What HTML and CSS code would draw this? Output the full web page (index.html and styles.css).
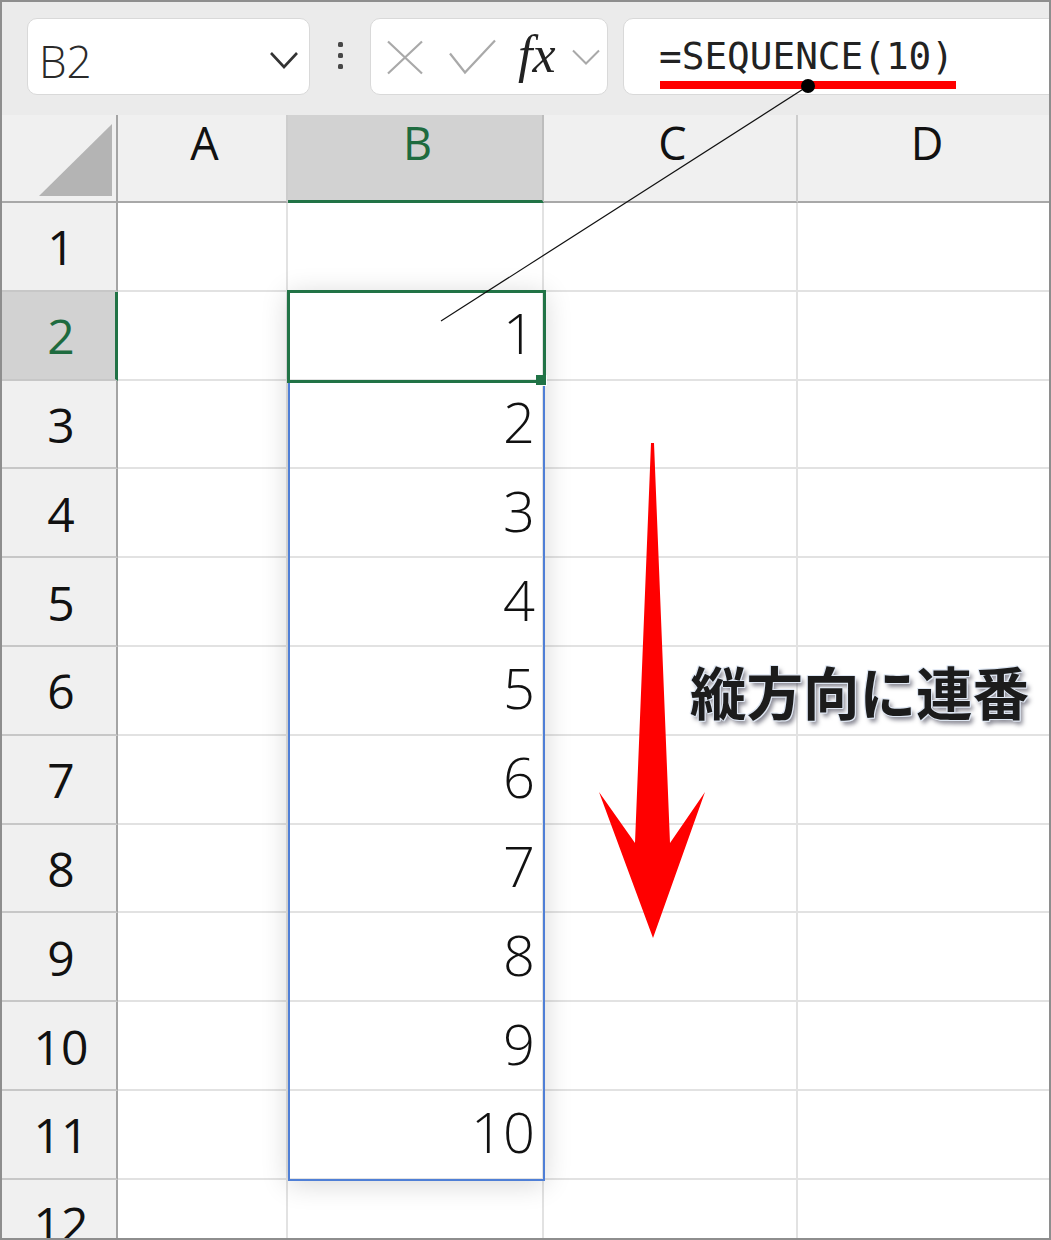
FILE: index.html
```html
<!DOCTYPE html>
<html lang="ja">
<head>
<meta charset="utf-8">
<title>SEQUENCE</title>
<link rel="stylesheet" href="styles.css">
</head>
<body>
<div class="frame">
  <div class="toolbar">
    <div class="namebox">
      <span class="ref">B2</span>
      <svg class="chev" width="30" height="30" viewBox="0 0 30 30"><path d="M2 11 L15 25 L28 11" fill="none" stroke="#333" stroke-width="2.6"/></svg>
    </div>
    <div class="dots"><i></i><i></i><i></i></div>
    <div class="fxbox">
      <svg class="ico-x" width="36" height="36" viewBox="0 0 36 36"><path d="M1 2.5 L35 34.5 M35 2.5 L1 34.5" fill="none" stroke="#a9a9a9" stroke-width="2.2"/></svg>
      <svg class="ico-check" width="50" height="36" viewBox="0 0 50 36"><path d="M3 14.5 L18 33.5 L48 1.5" fill="none" stroke="#a9a9a9" stroke-width="2.2"/></svg>
      <span class="fx">fx</span>
      <svg class="ico-chev" width="28" height="30" viewBox="0 0 28 30"><path d="M1 8.5 L14 21.5 L27 8.5" fill="none" stroke="#a9a9a9" stroke-width="2"/></svg>
    </div>
    <div class="formula"><span class="ftext">=SEQUENCE(10)</span></div>
  </div>

  <div class="sheet">
    <div class="corner"><svg width="118" height="88" viewBox="0 0 118 88"><polygon points="112,9 112,81 39,81" fill="#b4b4b4"/></svg></div>
    <div class="ch">A</div>
    <div class="ch sel">B</div>
    <div class="ch">C</div>
    <div class="ch last">D</div>

    <div class="rh">1</div><div class="c"></div><div class="c"></div><div class="c"></div><div class="c last"></div>
    <div class="rh sel">2</div><div class="c"></div><div class="c num">1</div><div class="c"></div><div class="c last"></div>
    <div class="rh">3</div><div class="c"></div><div class="c num">2</div><div class="c"></div><div class="c last"></div>
    <div class="rh">4</div><div class="c"></div><div class="c num">3</div><div class="c"></div><div class="c last"></div>
    <div class="rh">5</div><div class="c"></div><div class="c num">4</div><div class="c"></div><div class="c last"></div>
    <div class="rh">6</div><div class="c"></div><div class="c num">5</div><div class="c"></div><div class="c last"></div>
    <div class="rh">7</div><div class="c"></div><div class="c num">6</div><div class="c"></div><div class="c last"></div>
    <div class="rh">8</div><div class="c"></div><div class="c num">7</div><div class="c"></div><div class="c last"></div>
    <div class="rh">9</div><div class="c"></div><div class="c num">8</div><div class="c"></div><div class="c last"></div>
    <div class="rh">10</div><div class="c"></div><div class="c num">9</div><div class="c"></div><div class="c last"></div>
    <div class="rh">11</div><div class="c"></div><div class="c num">10</div><div class="c"></div><div class="c last"></div>
    <div class="rh">12</div><div class="c"></div><div class="c"></div><div class="c"></div><div class="c last"></div>
  </div>

  <div class="spill"></div>
  <div class="active"></div>
  <div class="handle"></div>

  <svg class="annot" width="1051" height="1240" viewBox="0 0 1051 1240">
    <rect x="660" y="81" width="296" height="8" fill="#ff0000"/>
    <line x1="808" y1="86" x2="441" y2="321" stroke="#111" stroke-width="1.2"/>
    <circle cx="808" cy="86" r="7" fill="#000"/>
    <polygon points="651,443 654,443 670,843 705,792 653,938 599,792 635,843" fill="#ff0000"/>
  </svg>
  <div class="label">縦方向に連番</div>
</div>
</body>
</html>
```

FILE: styles.css
```css
html, body {
  margin: 0;
  padding: 0;
  background: #ffffff;
}

.frame {
  position: relative;
  width: 1051px;
  height: 1240px;
  overflow: hidden;
  background: #ffffff;
  font-family: "Open Sans", "Noto Sans", sans-serif;
}

.frame::after {
  content: "";
  position: absolute;
  inset: 0;
  box-shadow: inset 0 0 0 2px #8e8e8e;
  pointer-events: none;
}

/* ---------- toolbar ---------- */
.toolbar {
  height: 115px;
  box-sizing: border-box;
  background: #ebebeb;
  display: flex;
  align-items: flex-start;
  padding: 18px 0 0 27px;
  white-space: nowrap;
}

.namebox {
  width: 283px;
  height: 77px;
  box-sizing: border-box;
  background: #ffffff;
  border: 1px solid #d9d9d9;
  border-radius: 10px;
  display: flex;
  align-items: flex-start;
  justify-content: space-between;
  padding: 0 10px 0 11px;
  flex: none;
}

.ref {
  font-size: 44px;
  line-height: 1;
  font-weight: 300;
  color: #2a2a2a;
  margin-top: 20px;
}

.chev {
  margin-top: 23px;
}

.dots {
  width: 60px;
  height: 77px;
  flex: none;
  display: flex;
  flex-direction: column;
  align-items: center;
  justify-content: center;
  gap: 6px;
  padding-bottom: 2px;
  box-sizing: border-box;
}

.dots i {
  display: block;
  width: 5px;
  height: 5px;
  border-radius: 1.5px;
  background: #474747;
}

.fxbox {
  width: 238px;
  height: 77px;
  flex: none;
  box-sizing: border-box;
  background: #ffffff;
  border: 1px solid #d9d9d9;
  border-radius: 10px;
  display: flex;
  align-items: center;
  padding-left: 16px;
}

.ico-check {
  margin-left: 24px;
}

.fx {
  font-family: "Liberation Serif", "DejaVu Serif", serif;
  font-style: italic;
  font-size: 52px;
  line-height: 1;
  color: #222222;
  margin-left: 21px;
  margin-top: -4px;
}

.ico-chev {
  margin-left: 16px;
}

.formula {
  width: 520px;
  height: 77px;
  flex: none;
  box-sizing: border-box;
  background: #ffffff;
  border: 1px solid #d9d9d9;
  border-radius: 10px;
  margin-left: 15px;
  padding: 19px 0 0 35px;
}

.ftext {
  font-family: "DejaVu Sans Mono", "Liberation Mono", monospace;
  font-size: 37.7px;
  line-height: 1;
  color: #222222;
}

/* ---------- sheet ---------- */
.sheet {
  display: grid;
  grid-template-columns: 118px 170px 256px 254px 1fr;
  grid-template-rows: 88px;
  grid-auto-rows: 88.8px;
}

.corner {
  background: #f0f0f0;
  border-right: 2px solid #a4a4a4;
  border-bottom: 2px solid #a8a8a8;
  box-sizing: border-box;
  overflow: hidden;
}

.corner svg {
  display: block;
}

.ch {
  background: #f0f0f0;
  box-sizing: border-box;
  border-right: 2px solid #cdcdcd;
  border-bottom: 2px solid #a8a8a8;
  display: flex;
  justify-content: center;
  align-items: flex-start;
  padding-top: 5px;
  padding-left: 5px;
  font-size: 45px;
  line-height: 1;
  color: #111111;
}

.ch.sel {
  background: #d2d2d2;
  color: #1e6b3f;
  border-right-color: #bdbdbd;
  border-bottom: 3px solid #217346;
}

.ch.last {
  border-right: none;
}

.rh {
  background: #f0f0f0;
  box-sizing: border-box;
  border-right: 2px solid #a4a4a4;
  border-bottom: 2px solid #c7c7c7;
  display: flex;
  justify-content: center;
  align-items: center;
  font-size: 48px;
  line-height: 1;
  color: #111111;
  padding-top: 2px;
  padding-left: 6px;
}

.rh.sel {
  background: #d2d2d2;
  color: #1e6b3f;
  border-right: 3px solid #217346;
  padding-left: 7px;
}

.c {
  box-sizing: border-box;
  border-right: 2px solid #e2e2e2;
  border-bottom: 2px solid #e2e2e2;
}

.c.last {
  border-right: none;
}

.num {
  display: flex;
  justify-content: flex-end;
  align-items: center;
  padding: 0 7px 6px 0;
  font-size: 56px;
  line-height: 1;
  font-weight: 300;
  color: #111111;
}

/* ---------- overlays ---------- */
.spill {
  position: absolute;
  left: 288px;
  top: 291px;
  width: 257px;
  height: 890px;
  box-sizing: border-box;
  border: 2px solid #4f7fd6;
  box-shadow: 0 3px 26px rgba(0, 0, 0, 0.16);
  pointer-events: none;
}

.active {
  position: absolute;
  left: 287px;
  top: 290px;
  width: 259px;
  height: 93px;
  box-sizing: border-box;
  border: 3px solid #217346;
  pointer-events: none;
}

.handle {
  position: absolute;
  left: 536px;
  top: 375px;
  width: 11px;
  height: 11px;
  box-sizing: border-box;
  background: #217346;
  border: 1px solid #ffffff;
  border-top: none;
  border-left: none;
}

.annot {
  position: absolute;
  left: 0;
  top: 0;
  pointer-events: none;
}

.label {
  position: absolute;
  left: 690px;
  top: 662px;
  font-family: "Noto Sans CJK JP", "Noto Sans CJK SC", sans-serif;
  font-weight: 700;
  font-size: 56.5px;
  line-height: 1;
  color: #1c1c1c;
  white-space: nowrap;
  text-shadow:
    1px 0 0 #dfe7f3,
    -1px 0 0 #dfe7f3,
    0 1px 0 #dfe7f3,
    0 -1px 0 #dfe7f3,
    1px 1px 0 #dfe7f3,
    -1px -1px 0 #dfe7f3,
    3px 4px 4px rgba(40, 40, 60, 0.55);
}
```
